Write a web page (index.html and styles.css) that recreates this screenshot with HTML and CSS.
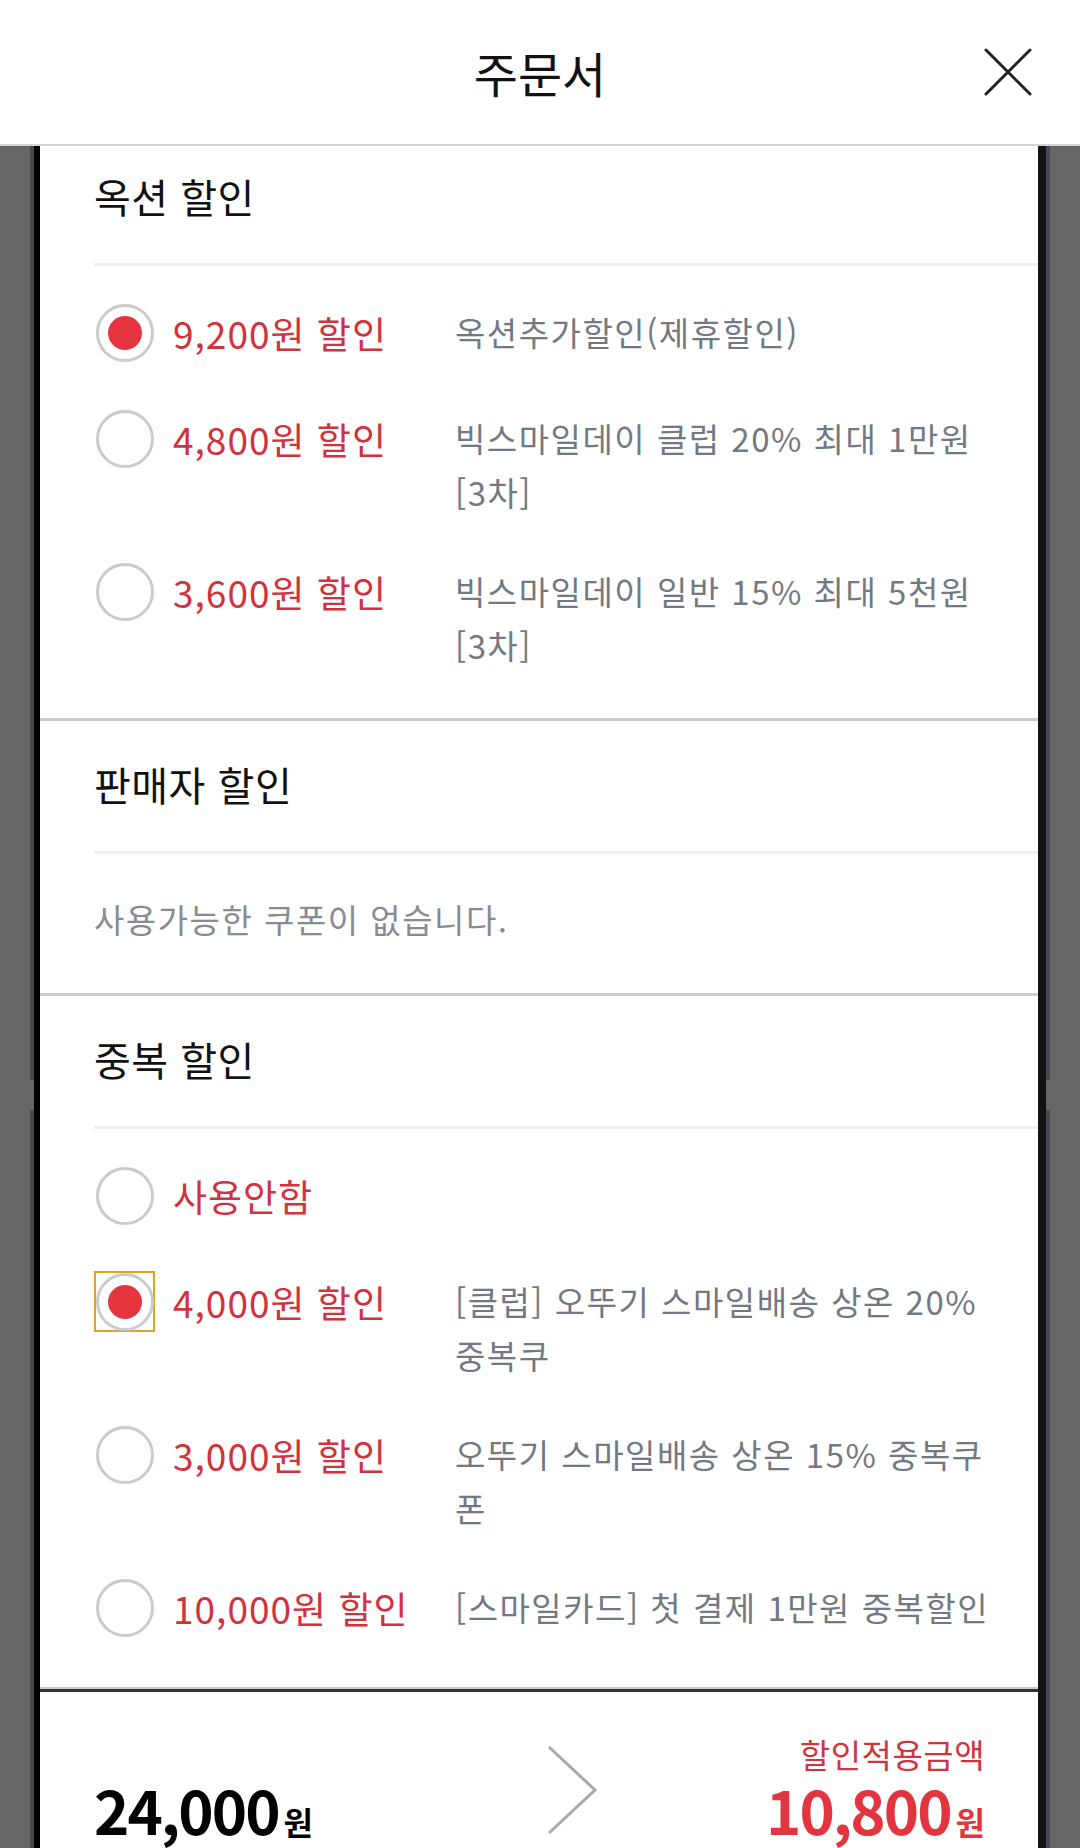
FILE: index.html
```html
<!DOCTYPE html>
<html lang="ko">
<head>
<meta charset="utf-8">
<title>주문서</title>
<link rel="stylesheet" href="styles.css">
</head>
<body>
<header class="topbar">
  <span class="topbar-side"></span>
  <h1 class="topbar-title">주문서</h1>
  <span class="topbar-side topbar-side-right">
    <svg class="close-icon" width="48" height="48" viewBox="0 0 48 48" aria-label="닫기">
      <path d="M2 2 L46 46 M46 2 L2 46" stroke="#222" stroke-width="3" fill="none" stroke-linecap="round"/>
    </svg>
  </span>
</header>

<div class="stage">
  <div class="frame">
    <div class="panel">
      <div class="scroller">
        <section class="sec">
          <h2 class="sec-head">옥션 할인</h2>
          <ul class="opt-list">
            <li class="opt">
              <div class="opt-left"><span class="pick"><span class="radio checked"></span></span><span class="opt-amt">9,200원 할인</span></div>
              <p class="opt-desc">옥션추가할인(제휴할인)</p>
            </li>
            <li class="opt">
              <div class="opt-left"><span class="pick"><span class="radio"></span></span><span class="opt-amt">4,800원 할인</span></div>
              <p class="opt-desc">빅스마일데이 클럽 20% 최대 1만원 [3차]</p>
            </li>
            <li class="opt">
              <div class="opt-left"><span class="pick"><span class="radio"></span></span><span class="opt-amt">3,600원 할인</span></div>
              <p class="opt-desc">빅스마일데이 일반 15% 최대 5천원 [3차]</p>
            </li>
          </ul>
        </section>

        <section class="sec">
          <h2 class="sec-head">판매자 할인</h2>
          <p class="empty">사용가능한 쿠폰이 없습니다.</p>
        </section>

        <section class="sec sec-last">
          <h2 class="sec-head">중복 할인</h2>
          <ul class="opt-list">
            <li class="opt">
              <div class="opt-left"><span class="pick"><span class="radio"></span></span><span class="opt-amt">사용안함</span></div>
            </li>
            <li class="opt">
              <div class="opt-left"><span class="pick focus"><span class="radio checked"></span></span><span class="opt-amt">4,000원 할인</span></div>
              <p class="opt-desc">[클럽] 오뚜기 스마일배송 상온 20% 중복쿠</p>
            </li>
            <li class="opt">
              <div class="opt-left"><span class="pick"><span class="radio"></span></span><span class="opt-amt">3,000원 할인</span></div>
              <p class="opt-desc">오뚜기 스마일배송 상온 15% 중복쿠폰</p>
            </li>
            <li class="opt">
              <div class="opt-left"><span class="pick"><span class="radio"></span></span><span class="opt-amt">10,000원 할인</span></div>
              <p class="opt-desc">[스마일카드] 첫 결제 1만원 중복할인</p>
            </li>
          </ul>
        </section>

        <div class="sumbar">
          <div class="sum-total">24,000<span class="won">원</span></div>
          <svg class="sum-arrow" width="50" height="90" viewBox="0 0 50 90">
            <path d="M1 2 L47 45 L1 88" stroke="#a9a9a9" stroke-width="3" fill="none"/>
          </svg>
          <div class="sum-final">
            <div class="sum-label">할인적용금액</div>
            <div class="sum-amt">10,800<span class="won">원</span></div>
          </div>
        </div>
      </div>
    </div>
  </div>
</div>
</body>
</html>
```

FILE: styles.css
```css
* { box-sizing: border-box; }

html, body {
  margin: 0;
  padding: 0;
}

body {
  width: 1080px;
  height: 1848px;
  overflow: hidden;
  background: #666666;
  font-family: "Noto Sans CJK KR", "Noto Sans", sans-serif;
  color: #111;
}

/* ---------- top bar ---------- */
.topbar {
  height: 146px;
  background: #fff;
  border-bottom: 2px solid #d6d6d6;
  display: grid;
  grid-template-columns: 1fr auto 1fr;
  align-items: center;
}

.topbar-title {
  margin: 0;
  font-size: 48px;
  font-weight: 400;
  line-height: 60px;
  color: #111;
}

.topbar-side-right {
  display: flex;
  justify-content: flex-end;
  padding-right: 48px;
}

.close-icon { display: block; }

/* ---------- frame ---------- */
.stage {
  height: 1702px;
  padding: 0 30px;
  overflow: hidden;
}

.frame {
  position: relative;
  height: 100%;
  border-left: 4px solid #47474d;
  border-right: 4px solid #47474d;
}

/* small gaps in the dark edge strips (scroll marks) */
.frame::before,
.frame::after {
  content: "";
  position: absolute;
  top: 934px;
  width: 4px;
  height: 30px;
  background: #666666;
}

.frame::before { left: -4px; }
.frame::after { right: -4px; }

.panel {
  height: 100%;
  background: #fff;
  border-left: 6px solid #000;
  border-right: 8px solid #121212;
  overflow: hidden;
}

.scroller {
  margin-top: -13px;
}

/* ---------- sections ---------- */
.sec + .sec {
  border-top: 3px solid #cdcdcd;
}

.sec-last {
  border-bottom: 2px solid #cdcdcd;
}

.sec-head {
  margin: 0 0 0 54px;
  height: 133px;
  padding-bottom: 4px;
  border-bottom: 3px solid #efefef;
  display: flex;
  align-items: center;
  font-size: 40px;
  letter-spacing: 0.5px;
  font-weight: 400;
  color: #111;
}

.empty {
  margin: 0;
  height: 139px;
  padding: 0 0 10px 54px;
  display: flex;
  align-items: center;
  font-size: 33px;
  letter-spacing: 1.5px;
  color: #888b92;
}

/* ---------- options ---------- */
.opt-list {
  list-style: none;
  margin: 0;
  padding: 16px 0 24px;
}

.opt {
  display: flex;
  align-items: flex-start;
  padding: 20px 0 25px 54px;
}

.opt-left {
  flex: none;
  width: 361px;
  height: 61px;
  display: flex;
  align-items: center;
  gap: 18px;
}

.pick {
  flex: none;
  width: 61px;
  height: 61px;
  display: flex;
  align-items: center;
  justify-content: center;
}

.pick.focus {
  box-shadow: inset 0 0 0 2px #dca424;
}

.radio {
  width: 58px;
  height: 58px;
  border: 3px solid #cbcbcb;
  border-radius: 50%;
  display: flex;
  align-items: center;
  justify-content: center;
}

.radio.checked::after {
  content: "";
  width: 34px;
  height: 34px;
  border-radius: 50%;
  background: #e5343f;
}

.opt-amt {
  font-size: 37px;
  letter-spacing: 1px;
  color: #d1323d;
  white-space: nowrap;
}

.opt-desc {
  margin: 0 0 -3px;
  padding-top: 3px;
  width: 540px;
  font-size: 33px;
  letter-spacing: 1.5px;
  line-height: 54px;
  color: #737983;
}

/* ---------- summary bar ---------- */
.sumbar {
  border-top: 3px solid #333;
  display: flex;
  align-items: flex-end;
  padding: 42px 53px 0 54px;
}

.sum-total {
  flex: none;
  width: 454px;
  font-size: 60px;
  font-weight: 700;
  letter-spacing: -2px;
  line-height: 70px;
  color: #000;
}

.won {
  font-size: 32px;
  letter-spacing: 0;
  margin-left: 5px;
}

.sum-arrow {
  flex: none;
  align-self: flex-start;
  margin-top: 11px;
}

.sum-final {
  flex: 1;
  text-align: right;
}

.sum-label {
  font-size: 33px;
  letter-spacing: 0.5px;
  line-height: 40px;
  color: #d1343f;
}

.sum-amt {
  font-size: 60px;
  font-weight: 700;
  letter-spacing: -2px;
  line-height: 70px;
  color: #e2353f;
}
```
